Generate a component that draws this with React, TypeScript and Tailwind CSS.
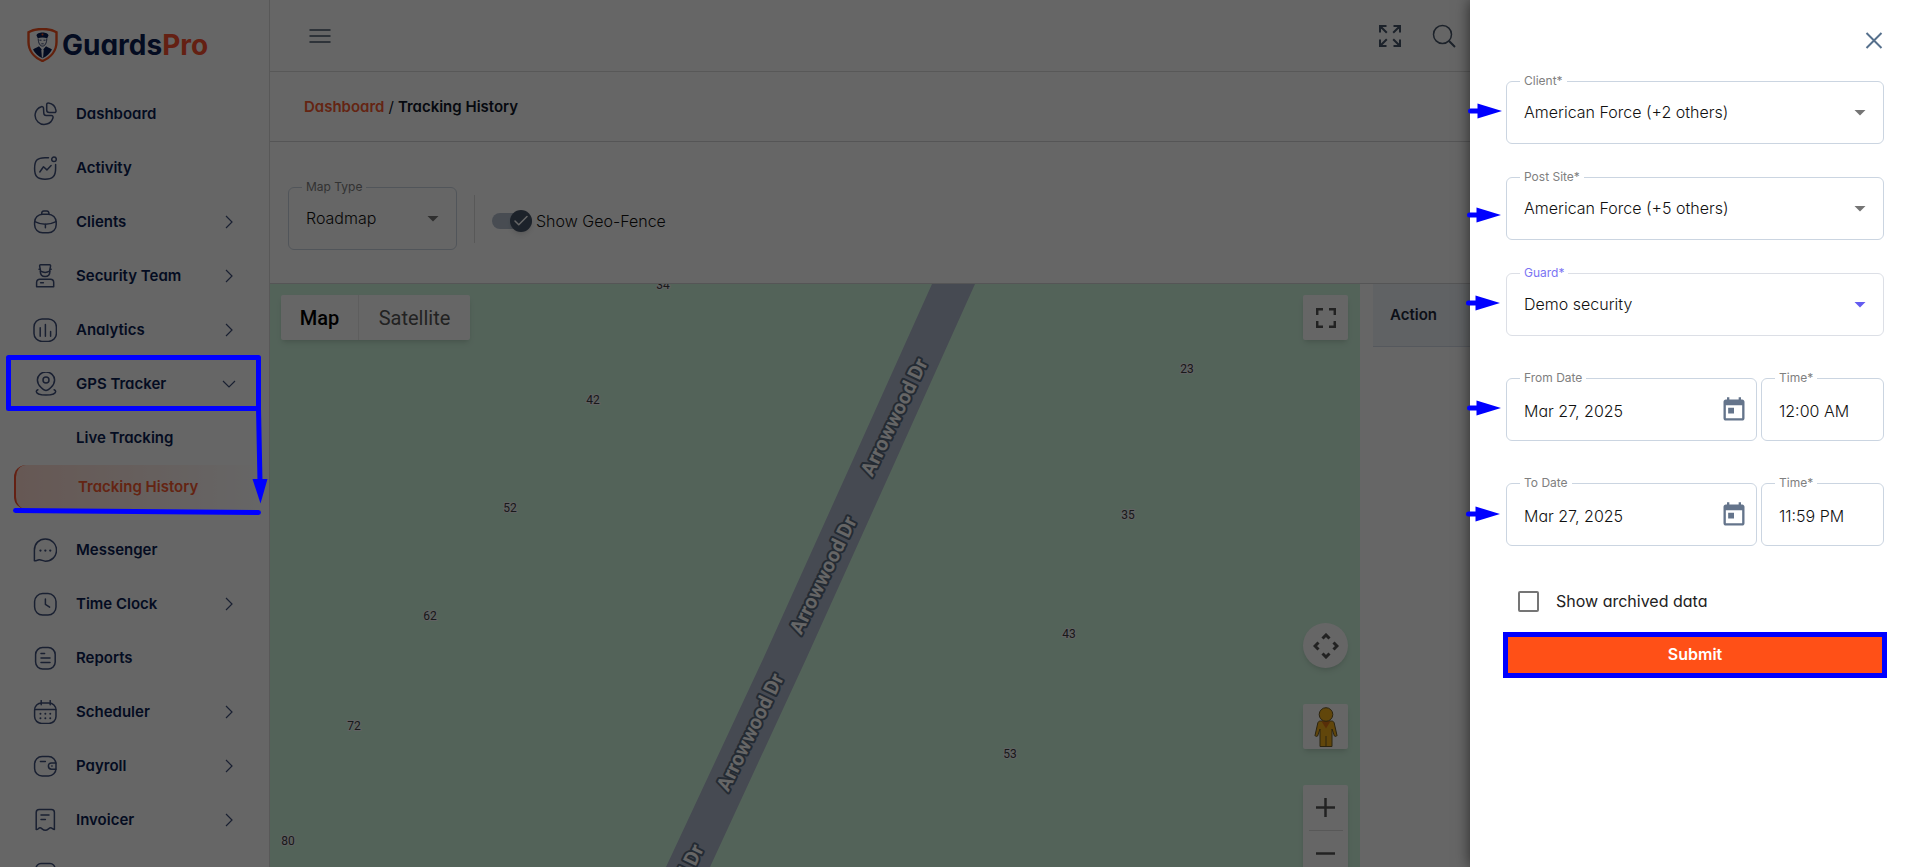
import type { ReactNode } from 'react';
import { Check } from 'lucide-react';

interface NavItem {
  label: string;
  icon: ReactNode;
  arrow?: 'right' | 'down';
}

const icons = {
  dashboard: (
    <>
      <path d="M13.7 2.6c0-1 .8-1.7 1.8-1.5 3.9.6 6.9 3.6 7.5 7.5.2 1-.5 1.9-1.5 1.9h-5.3c-1.4 0-2.5-1.1-2.5-2.5z" />
      <path d="M8.3 4.7c1.1-.4 2.1.3 2.2 1.4l.3 5.2c.1 1.4 1 2.2 2.3 2.2h5.2c1.3 0 2 1 1.7 2.2A9.1 9.1 0 1 1 8.3 4.7z" />
    </>
  ),
  activity: (
    <>
      <path d="M15.5 1.7H12C4.2 1.7 1.6 4.3 1.6 12.4S4.4 23.2 12 23.2s10.6-2.8 10.6-10.8V8.6" />
      <circle cx="21" cy="3.3" r="2.3" />
      <path d="M6.8 16l3.7-5.2 3.4 3.1 4.2-4.4" />
    </>
  ),
  clients: (
    <>
      <rect x="1.6" y="4.2" width="21.6" height="18.6" rx="8" />
      <path d="M8.6 4.2c0-2.4.8-3.2 2.2-3.2h3c1.4 0 2.2.8 2.2 3.2M1.8 11.6c6.6 3.3 14.6 3.3 21.2 0M12.4 14v3.8" />
    </>
  ),
  security: (
    <>
      <path d="M6.6 1.8c0-.7.5-1 1-1h9c.6 0 1 .4 1 1l-1 5.4c-2.8 1.5-6.2 1.5-9 0z" />
      <path d="M7.3 7.2c0 3.3 2 5.4 4.8 5.4s4.8-2.1 4.8-5.4M6 5.2h1M17.2 5.2h1" />
      <path d="M3.6 22.8v-4.3c0-2 1.3-3.3 3.3-3.3h10.5c2 0 3.3 1.3 3.3 3.3v4.3zM7.6 18.8h2.8" />
    </>
  ),
  analytics: (
    <>
      <rect x="1" y="1" width="22.4" height="22.4" rx="8" />
      <path d="M7.2 9.8v8.4M12.4 6.6v11.6M17.6 13.6v4.6" />
    </>
  ),
  gps: (
    <>
      <path d="M13 18.6c-1.6 0-8.6-4.6-8.6-10.6a8.6 8 0 0 1 17.2 0c0 6-7 10.6-8.6 10.6z" />
      <circle cx="13" cy="8" r="3" />
      <path d="M4.9 17.8c-1 .4-1.6 1-1.6 1.8 0 2.1 4.4 3.5 9.7 3.5s9.7-1.4 9.7-3.5c0-.8-.6-1.4-1.6-1.8" />
    </>
  ),
  messenger: (
    <>
      <path d="M1.4 22.8V12.2C1.4 5.6 6 1 12.3 1s11.2 4.8 11.2 11.2-5 11-11.2 11c-2.4 0-4.2-1.8-6.3-1.4-1.6.3-2.9 1.2-4.6 1z" />
      <path d="M7.4 12.6h.1M12.3 12.6h.1M17.2 12.6h.1" strokeWidth="2.2" />
    </>
  ),
  clock: (
    <>
      <rect x="1.6" y="1.6" width="21.4" height="21.4" rx="8" />
      <path d="M12.4 7v5.4l4.2 2.8" />
    </>
  ),
  reports: (
    <>
      <rect x="2.6" y="1.6" width="19.6" height="21.4" rx="7" />
      <path d="M8 7.6h3.6M8 12h9M8 16.4h9" />
    </>
  ),
  scheduler: (
    <>
      <rect x="1.6" y="3" width="21.4" height="20.4" rx="7" />
      <path d="M1.8 9.4h21M8.2.6v4.2M17.2.6v4.2" />
      <path d="M7.4 13.8h.1M12.3 13.8h.1M17.2 13.8h.1M7.4 18.2h.1M12.3 18.2h.1M17.2 18.2h.1" strokeWidth="1.9" />
    </>
  ),
  payroll: (
    <>
      <rect x="1.6" y="2.6" width="21.4" height="19.4" rx="7.5" />
      <path d="M7.4 7.4h5M23 9h-4.4c-2.2 0-3.2 1.2-3.2 3s1 3.2 3.2 3.2H23M18.8 12.1h.3" />
    </>
  ),
  invoicer: (
    <path d="M3.2 21.4V4.4c0-2 1-3 3-3h12.2c2 0 3 1 3 3v17c-1.6 0-2.2-1.6-3.8-1.6-1.8 0-2.6 2.4-5.3 2.4s-3.5-2.4-5.3-2.4c-1.6 0-2.2 2.4-3.8 1.6zM8 7h8M8 11.6h4.4" />
  ),
  settings: <rect x="3" y="1.6" width="19" height="21.4" rx="5" />,
};

const mainNav: NavItem[] = [
  { label: 'Dashboard', icon: icons.dashboard },
  { label: 'Activity', icon: icons.activity },
  { label: 'Clients', icon: icons.clients, arrow: 'right' },
  { label: 'Security Team', icon: icons.security, arrow: 'right' },
  { label: 'Analytics', icon: icons.analytics, arrow: 'right' },
  { label: 'GPS Tracker', icon: icons.gps, arrow: 'down' },
];

const bottomNav: NavItem[] = [
  { label: 'Messenger', icon: icons.messenger },
  { label: 'Time Clock', icon: icons.clock, arrow: 'right' },
  { label: 'Reports', icon: icons.reports },
  { label: 'Scheduler', icon: icons.scheduler, arrow: 'right' },
  { label: 'Payroll', icon: icons.payroll, arrow: 'right' },
  { label: 'Invoicer', icon: icons.invoicer, arrow: 'right' },
  { label: '', icon: icons.settings },
];

const houseNumbers = [
  { value: '34', x: 393, y: 5 },
  { value: '42', x: 323, y: 120 },
  { value: '23', x: 917, y: 89 },
  { value: '52', x: 240, y: 228 },
  { value: '35', x: 858, y: 235 },
  { value: '62', x: 160, y: 336 },
  { value: '43', x: 799, y: 354 },
  { value: '72', x: 84, y: 446 },
  { value: '53', x: 740, y: 474 },
  { value: '80', x: 18, y: 561 },
];

const streetLabels = [
  { x: 624, y: 133 },
  { x: 553, y: 291 },
  { x: 480, y: 448 },
  { x: 400, y: 619 },
];

function NavRow({ item }: { item: NavItem }) {
  return (
    <a href="#" className="flex h-[54px] items-center pr-[33px] pl-[33px]">
      <svg
        className="h-6 w-6 shrink-0"
        viewBox="0 0 24 24"
        fill="none"
        stroke="#40507c"
        strokeWidth="1.5"
        strokeLinecap="round"
        strokeLinejoin="round"
      >
        {item.icon}
      </svg>
      <span className="ml-[19px] flex-1 pt-px">{item.label}</span>
      {item.arrow && (
        <svg
          className={`h-3.5 w-3.5 ${item.arrow === 'down' ? 'rotate-90' : ''}`}
          viewBox="0 0 14 14"
          fill="none"
          stroke="#40507c"
          strokeWidth="1.2"
        >
          <path d="M4 1l6 6-6 6" />
        </svg>
      )}
    </a>
  );
}

function Logo() {
  return (
    <div className="flex h-[87px] items-center gap-1 pt-0.5 pl-[27px]">
      <svg className="h-[34px] w-[31px]" viewBox="0 0 31 34">
        <path
          d="M15.500 1c5 0 9.500.6 14 3.200V14c0 8.500-5.500 15.500-14 19C7 29.500 1.500 22.500 1.500 14V4.200C6 1.600 10.500 1 15.500 1z"
          fill="#fff"
          stroke="#f4511e"
          strokeWidth="2.400"
        />
        <path d="M6 21.500c2-1.500 4.500-2 6-3.300l3.500 4 3.500-4c1.500 1.300 4 1.800 6 3.300-2 4-5.500 7-9.500 8.800C11.500 28.500 8 25.500 6 21.500z" fill="#0b1e54" />
        <path d="M15.500 20.500l1.200 1.600-.6 7.400h-1.200l-.6-7.400z" fill="#fff" />
        <path d="M9.500 7.600c0-2 3-3.200 6-3.200s6 1.200 6 3.200l-1.300 2.600c-3-1-6.400-1-9.400 0z" fill="#0b1e54" />
        <path d="M11.200 10.500c0 4.500 1.800 7.600 4.300 7.600s4.300-3.100 4.300-7.600" fill="none" stroke="#0b1e54" strokeWidth=".8" />
        <path d="M12.500 12.200h2M16.500 12.200h2M14.300 15.800h2.400" stroke="#0b1e54" strokeWidth=".8" />
        <circle cx="15.500" cy="6.600" r="1" fill="#f4511e" />
      </svg>
      <span className="text-[28px] leading-8 font-bold text-[#0b1e54]">
        Guards<span className="text-[#fa5230]">Pro</span>
      </span>
    </div>
  );
}

function Sidebar() {
  return (
    <aside className="w-[270px] shrink-0 border-r border-[#dcdcdc] bg-white text-[15px] font-semibold text-[#0b1e54] [font-feature-settings:'cv11']">
      <Logo />
      <nav>
        {mainNav.map((item) => (
          <NavRow key={item.label} item={item} />
        ))}
        <a href="#" className="flex h-[54px] items-center pt-px pl-[76px]">
          Live Tracking
        </a>
        <a
          href="#"
          className="mr-2 mb-[14px] ml-[14px] flex h-[44px] items-center rounded-l-xl border-l-2 border-[#fa5230] bg-linear-to-r from-[#ffdcd2] to-white pt-px pl-[62px] text-[#fa5a30]"
        >
          Tracking History
        </a>
        {bottomNav.map((item) => (
          <NavRow key={item.label} item={item} />
        ))}
      </nav>
    </aside>
  );
}

interface SelectFieldProps {
  id: string;
  label: string;
  value: string;
  active?: boolean;
}

function SelectField({ id, label, value, active }: SelectFieldProps) {
  return (
    <div className="relative">
      <FieldLabel id={id} label={label} active={active} />
      <select
        id={id}
        className={`h-[63px] w-full appearance-none rounded-md border bg-white pr-10 pb-0.5 pl-[17px] text-base font-light text-[#111] ${active ? 'border-[#dcdfe6]' : 'border-[#cbd5e1]'}`}
      >
        <option>{value}</option>
      </select>
      <svg
        className={`pointer-events-none absolute top-[29px] right-[18px] h-1.5 w-3 ${active ? 'text-[#635bf0]' : 'text-[#757575]'}`}
        viewBox="0 0 12 6"
        fill="currentColor"
      >
        <path d="M0.500 0h11L6 5.500z" />
      </svg>
    </div>
  );
}

function FieldLabel({ id, label, active }: { id: string; label: string; active?: boolean }) {
  return (
    <label
      htmlFor={id}
      className={`absolute -top-2 left-[14px] bg-white px-1 text-xs leading-4 ${active ? 'text-[#7b74f3]' : 'text-[#808080]'}`}
    >
      {label}
    </label>
  );
}

interface TextFieldProps {
  id: string;
  label: string;
  value: string;
  calendar?: boolean;
}

function TextField({ id, label, value, calendar }: TextFieldProps) {
  return (
    <div className="relative">
      <FieldLabel id={id} label={label} />
      <div className="flex h-[63px] items-center rounded-md border border-[#cbd5e1] pr-2 pl-[17px]">
        <input
          id={id}
          type="text"
          defaultValue={value}
          className="w-full min-w-0 flex-1 pt-0.5 text-base font-light text-[#111] outline-none [font-feature-settings:'cv11']"
        />
        {calendar && (
          <button type="button" aria-label={`Choose ${label}`}>
            <svg className="h-7 w-7" viewBox="0 0 24 24" fill="#64748b">
              <path d="M19 3h-1V1h-2v2H8V1H6v2H5c-1.110 0-1.990.9-1.990 2L3 19c0 1.100.89 2 2 2h14c1.100 0 2-.9 2-2V5c0-1.100-.9-2-2-2zm0 16H5V8h14v11zM7 10h5v5H7z" />
            </svg>
          </button>
        )}
      </div>
    </div>
  );
}

function Header() {
  return (
    <header className="flex h-[72px] items-center justify-between border-b border-[#dcdcdc] pr-[463px] pl-[38px]">
      <button type="button" aria-label="Toggle menu">
        <svg className="h-6 w-6" viewBox="0 0 24 24" stroke="#475569" strokeWidth="1.500" strokeLinecap="round">
          <path d="M2 6h20M2 12h20M2 18h20" />
        </svg>
      </button>
      <div className="flex items-center gap-[31px]">
        <button type="button" aria-label="Full screen">
          <svg className="h-[22px] w-[22px]" viewBox="0 0 22 22" fill="none" stroke="#475569" strokeWidth="2">
            <path d="M1 7.500V1h6.500M14.500 1H21v6.500M21 14.500V21h-6.500M7.500 21H1v-6.500M1.500 1.500l6.300 6.300M20.500 1.500l-6.300 6.300M20.500 20.500l-6.300-6.300M1.500 20.500l6.300-6.300" />
          </svg>
        </button>
        <button type="button" aria-label="Search">
          <svg className="h-6 w-6" viewBox="0 0 24 24" fill="none" stroke="#475569" strokeWidth="1.500">
            <circle cx="10.500" cy="10.500" r="9" />
            <path d="M16.800 16.800L23 23" strokeWidth="2" />
          </svg>
        </button>
      </div>
    </header>
  );
}

function Toolbar() {
  return (
    <div className="flex h-[142px] items-center border-b border-[#d4d4d8] pt-3 pl-[18px]">
      <div className="w-[169px]">
        <SelectField id="map-type" label="Map Type" value="Roadmap" />
      </div>
      <div className="mr-[17px] ml-[17px] h-12 w-px bg-[#dcdcdc]" />
      <label className="flex items-center gap-1 pt-1 text-base font-light text-[#111]">
        <input type="checkbox" defaultChecked className="sr-only" />
        <span className="flex h-4 w-10 items-center justify-end rounded-full bg-[#b4bfce]">
          <span className="flex h-[22px] w-[22px] items-center justify-center rounded-full bg-[#475569] shadow-md">
            <Check className="h-[18px] w-[18px] text-white" />
          </span>
        </span>
        Show Geo-Fence
      </label>
    </div>
  );
}

const mapButton = 'flex h-[45px] w-[45px] items-center justify-center bg-white shadow-md';

function MapView() {
  return (
    <div className="relative overflow-hidden bg-[#d0f7df] font-[Roboto,sans-serif]">
      <svg className="absolute top-0 left-0 h-[583px] w-[1090px]" viewBox="0 0 1090 583">
        <path d="M662 0h43L625 178 537 373 440 583H396L494 373 582 178z" fill="#afb8cc" />
        {houseNumbers.map((n) => (
          <text
            key={n.value}
            x={n.x}
            y={n.y}
            textAnchor="middle"
            fontSize="12"
            fill="#3c4043"
            stroke="#f1f3f4"
            strokeWidth="2"
            paintOrder="stroke"
          >
            {n.value}
          </text>
        ))}
        {streetLabels.map((s) => (
          <text
            key={s.y}
            transform={`translate(${s.x} ${s.y}) rotate(-64)`}
            textAnchor="middle"
            dominantBaseline="central"
            fontSize="20"
            fontWeight="700"
            fill="#fff"
            stroke="#5b6b80"
            strokeWidth="4"
            strokeLinejoin="round"
            paintOrder="stroke"
          >
            Arrowwood Dr
          </text>
        ))}
      </svg>

      <div className="absolute top-[11px] left-[11px] flex h-[45px] rounded-xs bg-white text-xl shadow-md">
        <button type="button" className="w-[78px] border-r border-[#ececec] font-medium text-black">
          Map
        </button>
        <button type="button" className="w-[111px] text-[#565656]">
          Satellite
        </button>
      </div>

      <div className="absolute top-[11px] right-3">
        <button type="button" aria-label="Toggle fullscreen view" className={`${mapButton} rounded-xs`}>
          <svg className="h-5 w-5" viewBox="0 0 20 20" fill="none" stroke="#555" strokeWidth="2.500">
            <path d="M1.200 7V1.200H7M13 1.200h5.800V7M18.800 13v5.800H13M7 18.800H1.200V13" />
          </svg>
        </button>
        <button type="button" aria-label="Map camera controls" className={`${mapButton} mt-[283px] rounded-full`}>
          <svg className="h-[26px] w-[26px]" viewBox="0 0 26 26" fill="none" stroke="#555" strokeWidth="3">
            <path d="M9.500 5.500L13 2l3.500 3.500M9.500 20.500L13 24l3.500-3.500M5.500 9.500L2 13l3.500 3.500M20.500 9.500L24 13l-3.500 3.500" />
          </svg>
        </button>
        <button type="button" aria-label="Street View" className={`${mapButton} mt-9 rounded-xs`}>
          <svg className="h-10 w-6" viewBox="0 0 24 40" stroke="#6b5a2a" strokeWidth="1">
            <path d="M6.500 14h11c1.500 0 2.300.7 2.700 2L23 28.500c0 .8-2 1.200-2.600.5L18 22v17.500H6V22l-2.400 7c-.6.7-2.600.3-2.600-.5L3.800 16c.4-1.300 1.200-2 2.700-2z" fill="#f2ae1c" />
            <path d="M12 29v10.500" />
            <path d="M7.500 14.300h9L12 21.500z" fill="#dd7316" stroke="none" />
            <circle cx="12" cy="7.500" r="6.800" fill="#f2ae1c" />
          </svg>
        </button>
        <div className="mt-9 flex w-[45px] flex-col items-center rounded-xs bg-white shadow-md">
          <button type="button" aria-label="Zoom in" className="flex h-[45px] w-full items-center justify-center">
            <svg className="h-[19px] w-[19px]" viewBox="0 0 19 19" stroke="#555" strokeWidth="2.500">
              <path d="M0 9.500h19M9.500 0v19" />
            </svg>
          </button>
          <span className="h-px w-[34px] bg-[#dcdcdc]" />
          <button type="button" aria-label="Zoom out" className="flex h-[45px] w-full items-center justify-center">
            <svg className="h-[19px] w-[19px]" viewBox="0 0 19 19" stroke="#555" strokeWidth="2.500">
              <path d="M0 9.500h19" />
            </svg>
          </button>
        </div>
      </div>
    </div>
  );
}

// Filled pointer with a short round tail, used to call out each field
function Pointer({ x, y }: { x: number; y: number }) {
  return (
    <g transform={`translate(${x} ${y})`}>
      <path d="M2.500 0H12" stroke="#00f" strokeWidth="5" strokeLinecap="round" />
      <path d="M9.500-7.500v15L34 0z" fill="#00f" />
    </g>
  );
}

function Drawer() {
  return (
    <section className="absolute inset-y-0 right-0 w-[449px] bg-white shadow-[0_0_14px_rgba(0,0,0,0.6)]">
      <form className="pr-[35px] pl-[36px]">
        <div className="flex h-[81px] justify-end pt-[29px]">
          <button type="button" aria-label="Close" className="h-[22px] w-[22px]">
            <svg className="h-[22px] w-[22px]" viewBox="0 0 22 22" stroke="#56708c" strokeWidth="2">
              <path d="M4.500 4l15 15M19.500 4l-15 15" />
            </svg>
          </button>
        </div>
        <div className="flex flex-col gap-[33px]">
          <SelectField id="client" label="Client*" value="American Force (+2 others)" />
          <SelectField id="post-site" label="Post Site*" value="American Force (+5 others)" />
          <SelectField id="guard" label="Guard*" value="Demo security" active />
        </div>
        <div className="mt-[42px] grid grid-cols-[1fr_123px] gap-x-1 gap-y-[42px]">
          <TextField id="from-date" label="From Date" value="Mar 27, 2025" calendar />
          <TextField id="from-time" label="Time*" value="12:00 AM" />
          <TextField id="to-date" label="To Date" value="Mar 27, 2025" calendar />
          <TextField id="to-time" label="Time*" value="11:59 PM" />
        </div>
        <label className="mt-[43px] flex h-6 items-center gap-[17px] pl-3 text-base text-[#222] [font-feature-settings:'cv11']">
          <input
            type="checkbox"
            className="h-[21px] w-[21px] appearance-none rounded-xs border-2 border-[#757575]"
          />
          Show archived data
        </label>
        <button
          type="submit"
          className="mt-[22px] h-10 w-full bg-[#ff5017] pb-0.5 text-base font-semibold text-white outline-[5px] -outline-offset-2 outline-[#0000ff] outline-solid"
        >
          Submit
        </button>
      </form>
      <svg className="pointer-events-none absolute top-0 -left-1 h-[600px] w-10" viewBox="0 0 40 600">
        <Pointer x={2} y={111} />
        <Pointer x={1} y={215} />
        <Pointer x={0} y={303} />
        <Pointer x={1} y={408} />
        <Pointer x={0} y={514} />
      </svg>
    </section>
  );
}

export default function App() {
  return (
    <div className="relative flex h-screen overflow-hidden bg-white font-[Inter,sans-serif]">
      <Sidebar />
      <main className="flex min-w-0 flex-1 flex-col">
        <Header />
        <div className="flex h-[70px] items-center border-b border-[#d4d4d8] pt-0.5 pl-[34px] text-[15px] font-semibold text-[#0f172a] [font-feature-settings:'cv11']">
          <a href="#" className="text-[#fa5a30]">
            Dashboard
          </a>
          <span className="mx-1 font-normal">/</span>
          Tracking History
        </div>
        <Toolbar />
        <div className="grid min-h-0 flex-1 grid-cols-[2fr_1fr] pr-3.5">
          <MapView />
          <div className="pl-[13px]">
            <table className="w-full">
              <thead>
                <tr className="h-[62px] border-b border-[#d5dde8] bg-[#eff4fb]">
                  <th className="pl-[17px] text-left text-[15px] font-semibold text-[#1e293b]">Action</th>
                </tr>
              </thead>
            </table>
          </div>
        </div>
      </main>

      <div className="absolute inset-0 bg-black/60" />
      <Drawer />

      {/* Callouts over the sidebar menu */}
      <svg
        className="pointer-events-none absolute top-0 left-0 h-[520px] w-[270px]"
        viewBox="0 0 270 520"
        fill="none"
        stroke="#00f"
        strokeWidth="5"
        strokeLinecap="round"
        strokeLinejoin="round"
      >
        <path d="M8.500 357.500h250v51H8.500zM258.500 408.500L260 482M15.500 510.500L258.500 512.500" />
        <path d="M252.500 479h15l-7 24.500z" fill="#00f" stroke="none" />
      </svg>
    </div>
  );
}
